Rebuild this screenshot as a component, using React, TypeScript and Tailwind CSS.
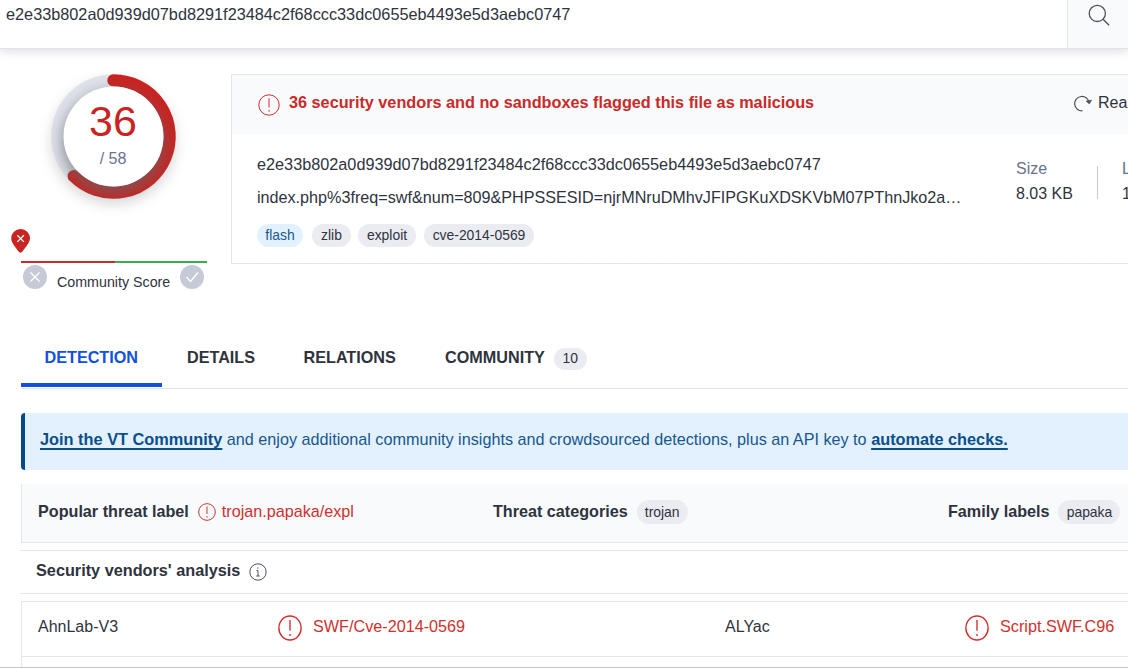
import type { ReactNode } from "react";

const HASH = "e2e33b802a0d939d07bd8291f23484c2f68ccc33dc0655eb4493e5d3aebc0747";

function Alert({ className, stroke = 1 }: { className: string; stroke?: number }) {
  return (
    <svg viewBox="0 0 22 22" fill="none" stroke="#d22f2c" strokeWidth={stroke} preserveAspectRatio="none" className={`shrink-0 ${className}`}>
      <circle cx="11" cy="11" r="10.2" />
      <path d="M11 4.2v9.2M11 16v1.8" />
    </svg>
  );
}

function Pill({ className = "", children }: { className?: string; children: ReactNode }) {
  return (
    <span className={`flex shrink-0 items-center justify-center rounded-full text-[13.9px] leading-none ${className}`}>
      {children}
    </span>
  );
}

function Gauge() {
  return (
    <svg width="180" height="180" viewBox="0 0 180 180" className="block">
      <defs>
        <filter id="outer" x="-50%" y="-50%" width="200%" height="200%">
          <feGaussianBlur stdDeviation="8" />
        </filter>
        <filter id="inner" x="-50%" y="-50%" width="200%" height="200%">
          <feGaussianBlur stdDeviation="7" />
        </filter>
        <clipPath id="ring">
          <circle cx="89.5" cy="90.5" r="62.3" />
        </clipPath>
      </defs>
      <circle cx="89.5" cy="96" r="60" fill="#000" opacity="0.2" filter="url(#outer)" />
      <circle cx="89.5" cy="90.5" r="62.3" fill="#e0e2ea" />
      <path d="M89.5 34.4A56.1 56.1 0 1 1 49.8 130.2" fill="none" stroke="#c92422" strokeWidth="12.4" strokeLinecap="round" />
      <g clipPath="url(#ring)">
        <circle cx="89.5" cy="96.5" r="52" fill="#60686c" opacity="0.62" filter="url(#inner)" />
      </g>
      <circle cx="89.5" cy="90.5" r="50" fill="#fff" />
    </svg>
  );
}

function Tab({ className, children }: { className: string; children: ReactNode }) {
  return <div className={`flex h-[59px] shrink-0 items-center pt-[3px] text-[16.2px] font-bold ${className}`}>{children}</div>;
}

function Vendor({ name, result, className }: { name: string; result: string; className: string }) {
  return (
    <div className={`flex shrink-0 items-center whitespace-nowrap ${className}`}>
      <span className="w-[240px] pb-[5px] text-[16px]">{name}</span>
      <Alert className="-mt-[3px] h-[26px] w-[24px]" stroke={1.25} />
      <span className="ml-[11px] pb-[5px] text-[16.2px] text-[#d22f2c]">{result}</span>
    </div>
  );
}

export default function App() {
  return (
    <div className="flex h-[668px] w-[1128px] flex-col overflow-hidden border-b border-[#c6c6c6] bg-white font-['Liberation_Sans',Arial,sans-serif] text-[#2f333d]">
      <header className="z-10 flex h-[49px] shrink-0 border-b border-[#dfe4ec] bg-white shadow-[0_3px_10px_rgba(0,0,0,0.12)]">
        <div className="w-[1067px] pt-[5px] pl-[6px] text-[16.27px] leading-[19px]">{HASH}</div>
        <div className="flex-1 border-l border-[#e0e5ee] bg-[#f8fafc] pt-[4px] pl-[20px]">
          <svg width="22" height="22" viewBox="0 0 22 22" fill="none" stroke="#4d515c" strokeWidth="1.3">
            <circle cx="9.3" cy="9.4" r="8.1" />
            <path d="M15.1 15.2l6 6" />
          </svg>
        </div>
      </header>

      <section className="flex h-[279px] shrink-0">
        <div className="relative w-[231px] shrink-0">
          <div className="h-[180px] w-[231px] pl-[24px]">
            <div className="-mt-[3px]"><Gauge /></div>
          </div>
          <div className="absolute top-[50px] left-[63px] flex w-[100px] flex-col items-center">
            <span className="text-[43px] leading-[44px] text-[#c92422]">36</span>
            <span className="mt-[6px] text-[16px] leading-[20px] text-[#68728d]">/ 58</span>
          </div>
          <div className="pt-[3px] pl-[11px]">
            <svg width="20" height="24" viewBox="0 0 20 24" className="block">
              <path d="M9.5 0A9.3 9.3 0 0 0 .2 9.3C.2 14 5 19 8 23q1.5 1.3 3 0c3-4 8-9 8-13.7A9.3 9.3 0 0 0 9.5 0z" fill="#c92422" />
              <path d="M6.3 6.3l6.6 6.6M12.9 6.3l-6.6 6.6" stroke="#fff" strokeWidth="1.3" />
            </svg>
          </div>
          <div className="mt-[7.5px] ml-[21px] flex h-[2.5px] w-[186px]">
            <div className="w-[94px] bg-[#cb2b2a]" />
            <div className="flex-1 bg-[#37ad4b]" />
          </div>
          <div className="mt-[2px] flex pl-[23px]">
            <svg width="24" height="24" viewBox="0 0 24 24" fill="none" stroke="#fff" strokeWidth="1.3">
              <circle cx="12" cy="12" r="12" fill="#c6cad6" stroke="none" />
              <path d="M7.5 7.5l9 9M16.5 7.5l-9 9" />
            </svg>
            <span className="ml-[10px] w-[114px] pt-[9px] text-[14.25px] leading-[17px] whitespace-nowrap">Community Score</span>
            <svg width="24" height="24" viewBox="0 0 24 24" fill="none" stroke="#fff" strokeWidth="1.4" className="ml-[9px]">
              <circle cx="12" cy="12" r="12" fill="#c6cad6" stroke="none" />
              <path d="M6.5 12l4 4.5 7.5-9" />
            </svg>
          </div>
        </div>

        <div className="mt-[25px] h-[190px] w-[920px] shrink-0 border border-[#e1e6ef]">
          <div className="flex h-[59px] bg-[#f8fafc]">
            <Alert className="mt-[19px] ml-[26px] size-[22px]" />
            <span className="mt-[17px] ml-[9px] w-[785px] shrink-0 text-[16.24px] leading-[20px] font-bold whitespace-nowrap text-[#c92a29]">36 security vendors and no sandboxes flagged this file as malicious</span>
            <svg width="18" height="17" viewBox="0 0 18 17" fill="none" stroke="#4d515c" strokeWidth="1.2" className="mt-[20px] shrink-0">
              <path d="M8.5 15.8A7.2 7.2 0 1 1 15 7.5" />
              <path d="M12 6l3.4 3 2.3-4z" fill="#4d515c" strokeWidth=".5" />
            </svg>
            <span className="mt-[18px] ml-[6px] text-[16px] leading-[20px] whitespace-nowrap">Rea</span>
          </div>
          <div className="flex">
            <div className="w-[784px] shrink-0 pt-[20px] pl-[25px]">
              <div className="text-[16.25px] leading-[20px]">{HASH}</div>
              <div className="mt-[13px] text-[16.17px] leading-[20px] whitespace-nowrap">index.php%3freq=swf&amp;num=809&amp;PHPSSESID=njrMNruDMhvJFIPGKuXDSKVbM07PThnJko2a…</div>
              <div className="mt-[17px] flex">
                <Pill className="h-[23px] w-[46px] bg-[#e2f1fe] text-[#17578d]">flash</Pill>
                <Pill className="ml-[9px] h-[23px] w-[39px] bg-[#ebecf2]">zlib</Pill>
                <Pill className="ml-[7px] h-[23px] w-[58px] bg-[#ebecf2]">exploit</Pill>
                <Pill className="ml-[8px] h-[23px] w-[110px] bg-[#ebecf2]">cve-2014-0569</Pill>
              </div>
            </div>
            <div className="w-[81px] shrink-0 pt-[25px] text-[16px] leading-[20px]">
              <div className="text-[#68728d]">Size</div>
              <div className="mt-[5px] whitespace-nowrap">8.03 KB</div>
            </div>
            <div className="mt-[32px] h-[33px] w-px shrink-0 bg-[#c6cad6]" />
            <div className="shrink-0 pt-[25px] pl-[24px] text-[16px] leading-[20px]">
              <div className="text-[#68728d]">L</div>
              <div className="mt-[5px]">1</div>
            </div>
          </div>
        </div>
      </section>

      <nav className="ml-[21px] flex h-[61px] shrink-0 border-b border-[#e3e5ee]">
        <Tab className="w-[141px] border-b-4 border-[#1250e0] pl-[23.5px] text-[#1250e0]">DETECTION</Tab>
        <Tab className="w-[117px] pb-[4px] pl-[25px]">DETAILS</Tab>
        <Tab className="w-[142px] pb-[4px] pl-[24.5px]">RELATIONS</Tab>
        <Tab className="pb-[4px] pl-[24px]">COMMUNITY</Tab>
        <Pill className="mt-[20px] ml-[9px] h-[22px] w-[33px] bg-[#ebecf2] pb-px">10</Pill>
      </nav>

      <div className="mt-[24px] ml-[21px] h-[57px] shrink-0 rounded-l-[4px] border-l-4 border-[#034a86] bg-[#e3f1fe] pt-[16px] pl-[15px] text-[16.2px] leading-[20px] whitespace-nowrap text-[#17578d]">
        <b className="text-[16.34px] text-[#0b4f8a] underline decoration-[1.5px] underline-offset-[3px]">Join the VT Community</b>
        <span> and enjoy additional community insights and crowdsourced detections, plus an API key to </span>
        <b className="text-[16.3px] text-[#0b4f8a] underline decoration-[1.5px] underline-offset-[3px]">automate checks.</b>
      </div>

      <div className="mt-[14px] ml-[21px] flex h-[59px] shrink-0 border-b border-l border-[#e1e6ef] bg-[#f8fafc] pt-[17px] pl-[16px] text-[16.17px] leading-[20px] whitespace-nowrap">
        <div className="flex w-[455px] shrink-0">
          <b>Popular threat label</b>
          <Alert className="mt-[2px] ml-[9px] size-[18px]" stroke={1.2} />
          <span className="ml-[6px] text-[#d22f2c]">trojan.papaka/expl</span>
        </div>
        <div className="flex w-[455px] shrink-0">
          <b>Threat categories</b>
          <Pill className="-mt-px ml-[9px] h-[24px] w-[51px] bg-[#ebecf2] pt-px">trojan</Pill>
        </div>
        <div className="flex shrink-0">
          <b>Family labels</b>
          <Pill className="-mt-px ml-[9px] h-[24px] w-[62px] bg-[#ebecf2] pt-px">papaka</Pill>
        </div>
      </div>

      <div className="mt-[7px] ml-[20px] flex h-[44px] shrink-0 border-y border-[#e3e6ee] pt-[9px] pl-[16px] text-[16.25px] leading-[20px]">
        <b>Security vendors&apos; analysis</b>
        <svg width="18" height="18" viewBox="0 0 18 18" fill="none" stroke="#4d515c" strokeWidth="1" className="mt-[3px] ml-[9px]">
          <circle cx="9" cy="9" r="8.2" />
          <path d="M7.6 7.5H9v5.5M7.3 13h3.4M8.8 4.3v1.4" />
        </svg>
      </div>

      <div className="mt-[7px] ml-[21px] flex h-[56px] shrink-0 border-y border-l border-[#e3e6ee] pl-[16px]">
        <Vendor name="AhnLab-V3" result="SWF/Cve-2014-0569" className="w-[687px]" />
        <Vendor name="ALYac" result="Script.SWF.C96" className="" />
      </div>
      <div className="ml-[21px] flex-1 border-l border-[#e3e6ee]" />
    </div>
  );
}
